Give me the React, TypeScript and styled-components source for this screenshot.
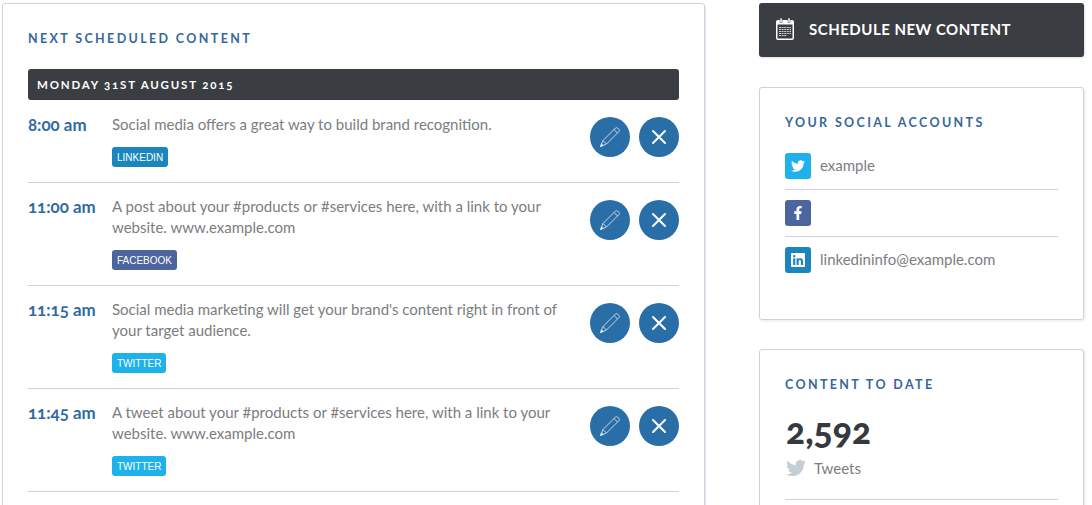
import React from "react";
import styled, { createGlobalStyle } from "styled-components";
import { FaTwitter, FaFacebookF, FaLinkedin } from "react-icons/fa";

const Global = createGlobalStyle`
  html, body { margin: 0; padding: 0; background: #fff; height: 505px; overflow: hidden; }
  body { font-family: Lato, "Open Sans", sans-serif; color: #7b7d81; }
  * { box-sizing: border-box; }
`;

const Page = styled.div`
  display: flex;
  align-items: flex-start;
  gap: 54px;
  padding: 3px 0 0 2px;
  height: 505px;
  overflow: hidden;
`;
const Main = styled.section`
  flex: 0 0 703px;
  height: 600px;
  padding: 26px 25px 0;
  background: #fff;
  border: 1px solid #cfd2d6;
  border-radius: 3px;
  box-shadow: 1px 1px 0 #e6ebf7;
`;
const Side = styled.aside`
  flex: 0 0 325px;
  display: flex;
  flex-direction: column;
`;
const Title = styled.h2`
  margin: 0;
  font-size: 12.5px;
  line-height: 18px;
  font-weight: 700;
  letter-spacing: 2.37px;
  color: #35689a;
  text-transform: uppercase;
`;
const DateBar = styled.div`
  margin-top: 21px;
  height: 31px;
  padding: 0 9px 1px;
  display: flex;
  align-items: center;
  background: #3a3e42;
  border-radius: 3px;
  color: #fff;
  font-size: 11.5px;
  font-weight: 700;
  letter-spacing: 1.8px;
  font-variant-numeric: oldstyle-nums;
  text-transform: uppercase;
`;
const Row = styled.article`
  display: flex;
  align-items: flex-start;
  padding: 14px 0 15px;
  border-bottom: 1px solid #cfd2d6;
  &:first-of-type { padding-top: 15px; }
  &:first-of-type > div:last-child { margin-top: 2px; }
`;
const Time = styled.div`
  flex: 0 0 84px;
  margin-top: -1px;
  font-size: 16.9px;
  line-height: 21px;
  font-weight: 700;
  font-variant-numeric: oldstyle-nums;
  color: #2f6ba3;
`;
const Body = styled.div`
  flex: 1;
  min-width: 0;
  padding-right: 28px;
`;
const Text = styled.p`
  margin: -1px 0 0;
  font-size: 15px;
  line-height: 21px;
  color: #7b7d81;
`;
const Tag = styled.span<{ $bg: string }>`
  display: inline-flex;
  align-items: center;
  height: 20px;
  margin-top: 12px;
  padding: 0 5px;
  border-radius: 3px;
  background: ${(p) => p.$bg};
  color: #fff;
  font-family: "Liberation Sans", sans-serif;
  font-size: 10px;
  text-transform: uppercase;
`;
const Actions = styled.div`
  flex: none;
  display: flex;
  gap: 9px;
  margin-top: 3px;
`;
const RoundButton = styled.button`
  width: 40px;
  height: 40px;
  padding: 0;
  border: 0;
  border-radius: 50%;
  background: #2a6ea8;
  display: flex;
  align-items: center;
  justify-content: center;
`;
const ScheduleButton = styled.button`
  height: 54px;
  padding: 0 17px 3px;
  display: flex;
  align-items: center;
  gap: 15px;
  border: 0;
  border-radius: 3px;
  background: #3a3e42;
  box-shadow: 1px 1px 2px rgba(0, 0, 0, 0.12);
  color: #fff;
  font-family: inherit;
  font-size: 15px;
  font-weight: 700;
  letter-spacing: 0.5px;
  text-transform: uppercase;
`;
const Card = styled.section<{ $height: number; $top: number }>`
  height: ${(p) => p.$height}px;
  margin-top: ${(p) => p.$top}px;
  padding: 26px 25px 0;
  border: 1px solid #cfd2d6;
  border-radius: 3px;
  box-shadow: 1px 1px 3px rgba(0, 0, 30, 0.1);
`;
const AccountList = styled.div`
  margin-top: 11px;
`;
const Account = styled.div`
  display: flex;
  align-items: center;
  gap: 9px;
  padding: 10px 0;
  border-bottom: 1px solid #cfd2d6;
  font-size: 15px;
  color: #7b7d81;
  &:last-child { border-bottom: 0; }
`;
const AccountName = styled.span`
  margin-top: -2px;
`;
const Badge = styled.span<{ $bg: string }>`
  width: 26px;
  height: 26px;
  flex: none;
  display: flex;
  align-items: center;
  justify-content: center;
  border-radius: 3px;
  background: ${(p) => p.$bg};
  color: #fff;
  font-size: 14px;
`;
const Stat = styled.div`
  margin-top: 18px;
  padding-bottom: 21px;
  border-bottom: 1px solid #cfd2d6;
`;
const StatValue = styled.div`
  font-size: 35.5px;
  line-height: 38px;
  font-weight: 900;
  font-variant-numeric: oldstyle-nums;
  color: #36393d;
  padding-left: 1px;
`;
const StatLabel = styled.div`
  display: flex;
  align-items: center;
  gap: 8px;
  margin-top: 8px;
  padding-left: 1px;
  font-size: 15px;
  line-height: 20px;
  color: #7b7d81;
  svg { color: #c5ced6; font-size: 20px; }
`;

const Pencil = () => (
  <svg width="22" height="22" viewBox="0 0 22 22" fill="none" stroke="#d5e2ee" strokeWidth="0.9" strokeLinejoin="round">
    <path d="M1.5 20.5 L4 14.5 L16.5 2 Q17.5 1.2 18.5 2 L20 3.5 Q20.8 4.5 20 5.5 L7.5 18 Z" />
    <path d="M4 14.5 L7.5 18 M15 3.5 L18.5 7" />
    <path d="M1.5 20.5 L2.6 17.8 L4.2 19.4 Z" fill="#d5e2ee" />
  </svg>
);
const Cross = () => (
  <svg width="16" height="16" viewBox="0 0 16 16" fill="none" stroke="#fff" strokeWidth="2" strokeLinecap="round">
    <path d="M2 2 L14 14 M14 2 L2 14" />
  </svg>
);
const CalendarIcon = () => (
  <svg width="18" height="22" viewBox="0 0 18 22">
    <rect x="0" y="2" width="18" height="20" rx="2" fill="#fff" />
    <rect x="1.5" y="6.5" width="15" height="14" fill="#3a3e42" />
    <rect x="4" y="0" width="2" height="4.5" fill="#fff" stroke="#3a3e42" strokeWidth="0.5" />
    <rect x="12" y="0" width="2" height="4.5" fill="#fff" stroke="#3a3e42" strokeWidth="0.5" />
    <g stroke="#c9cbcd" strokeWidth="1" strokeDasharray="2 .6">
      <path d="M3 9.5H15M3 11.5H15M3 13.5H15M3 15.5H15M3 17.5H11" />
    </g>
  </svg>
);

const TAGS = { linkedin: "#1b86bd", facebook: "#4c659e", twitter: "#1fb1ec" };

const items = [
  { time: "8:00 am", text: "Social media offers a great way to build brand recognition.", tag: "linkedin" },
  { time: "11:00 am", text: "A post about your #products or #services here, with a link to your website. www.example.com", tag: "facebook" },
  { time: "11:15 am", text: "Social media marketing will get your brand's content right in front of your target audience.", tag: "twitter" },
  { time: "11:45 am", text: "A tweet about your #products or #services here, with a link to your website. www.example.com", tag: "twitter" },
] as const;

export default function App() {
  return (
    <Page>
      <Global />
      <Main>
        <Title>Next scheduled content</Title>
        <DateBar>Monday 31st August 2015</DateBar>
        {items.map((it) => (
          <Row key={it.time}>
            <Time>{it.time}</Time>
            <Body>
              <Text>{it.text}</Text>
              <Tag $bg={TAGS[it.tag]}>{it.tag}</Tag>
            </Body>
            <Actions>
              <RoundButton aria-label="Edit"><Pencil /></RoundButton>
              <RoundButton aria-label="Delete"><Cross /></RoundButton>
            </Actions>
          </Row>
        ))}
      </Main>
      <Side>
        <ScheduleButton><CalendarIcon />Schedule new content</ScheduleButton>
        <Card $height={233} $top={30}>
          <Title>Your social accounts</Title>
          <AccountList>
            <Account><Badge $bg={TAGS.twitter}><FaTwitter /></Badge><AccountName>example</AccountName></Account>
            <Account><Badge $bg={TAGS.facebook}><FaFacebookF /></Badge></Account>
            <Account><Badge $bg={TAGS.linkedin}><FaLinkedin size={16} /></Badge><AccountName>linkedininfo@example.com</AccountName></Account>
          </AccountList>
        </Card>
        <Card $height={200} $top={29}>
          <Title>Content to date</Title>
          <Stat>
            <StatValue>2,592</StatValue>
            <StatLabel><FaTwitter />Tweets</StatLabel>
          </Stat>
        </Card>
      </Side>
    </Page>
  );
}
